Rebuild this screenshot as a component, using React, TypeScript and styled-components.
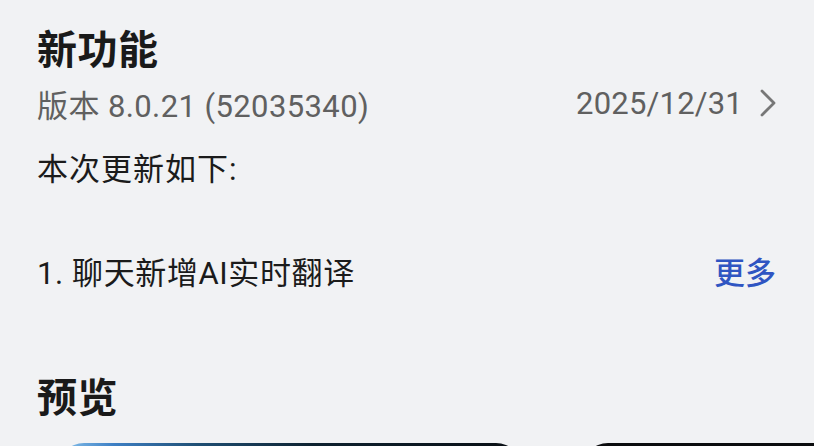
import React from "react";
import styled, { createGlobalStyle } from "styled-components";

const GlobalStyle = createGlobalStyle`
    html, body {
        margin: 0;
        padding: 0;
        background: #f1f2f4;
        overflow: hidden;
    }
    body {
        font-family: "Roboto", "Noto Sans CJK SC", sans-serif;
    }
`;

const Page = styled.div`
    height: 446px;
    padding: 27px 38px 0 37px;
    box-sizing: border-box;
    color: #1b1b1b;
    overflow: hidden;
`;

const SectionTitle = styled.h2<{ $top?: number }>`
    margin: ${(p) => p.$top ?? 0}px 0 0;
    font-size: 40px;
    line-height: 48px;
    font-weight: 700;
    color: #1a1a1a;
    letter-spacing: 0.5px;
`;

const Row = styled.div<{ $top: number }>`
    display: flex;
    align-items: center;
    justify-content: space-between;
    margin-top: ${(p) => p.$top}px;
    height: 40px;
`;

const VersionText = styled.span`
    font-size: 31px;
    color: #606060;
    letter-spacing: 0.4px;
`;

const DateLink = styled.span`
    display: flex;
    align-items: center;
    gap: 17px;
    font-size: 31px;
    color: #606060;
    letter-spacing: 0.2px;
`;

const Body = styled.p<{ $top: number }>`
    margin: ${(p) => p.$top}px 0 0;
    font-size: 31px;
    line-height: 40px;
    color: #1b1b1b;
    letter-spacing: 1px;
`;

const ItemText = styled.span`
    font-size: 31px;
    color: #1b1b1b;
    letter-spacing: 0.6px;
`;

const MoreLink = styled.span`
    font-size: 31px;
    color: #2f55c2;
    font-weight: 500;
`;

const Carousel = styled.div`
    display: flex;
    gap: 60px;
    margin-top: 20px;
    padding-left: 21px;
`;

const PreviewCard = styled.div<{ $variant: "blue" | "dark" }>`
    flex: 0 0 auto;
    width: 464px;
    height: 300px;
    border-radius: 26px;
    background: ${(p) =>
        p.$variant === "blue"
            ? "linear-gradient(90deg, #8cc6ee 0%, #3d7fc4 12%, #1f4f74 30%, #0e2230 55%, #0a0f14 100%)"
            : "#0b0c0e"};
`;

const Chevron = () => (
    <svg width="16" height="28" viewBox="0 0 16 28" fill="none">
        <polyline
            points="2,2 14,14 2,26"
            stroke="#777"
            strokeWidth="2.8"
            strokeLinecap="round"
            strokeLinejoin="round"
        />
    </svg>
);

const App = () => {
    return (
        <>
            <GlobalStyle />
            <Page>
                <SectionTitle>新功能</SectionTitle>
                <Row $top={8}>
                    <VersionText>版本 8.0.21 (52035340)</VersionText>
                    <DateLink>
                        2025/12/31
                        <Chevron />
                    </DateLink>
                </Row>
                <Body $top={27}>本次更新如下:</Body>
                <Row $top={60}>
                    <ItemText>1. 聊天新增AI实时翻译</ItemText>
                    <MoreLink>更多</MoreLink>
                </Row>
                <SectionTitle $top={85}>预览</SectionTitle>
                <Carousel>
                    <PreviewCard $variant="blue" />
                    <PreviewCard $variant="dark" />
                </Carousel>
            </Page>
        </>
    );
};

export default App;
